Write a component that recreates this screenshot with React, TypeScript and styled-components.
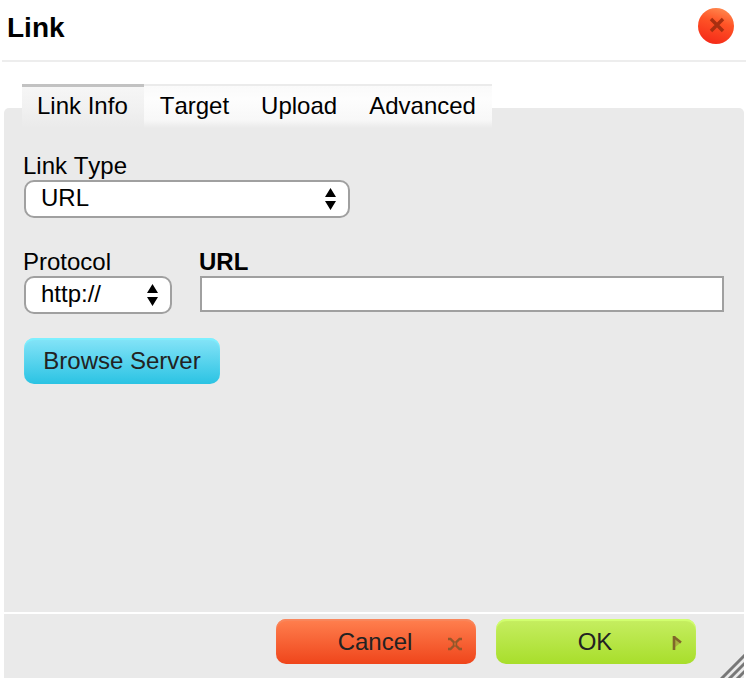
import React from "react";
import styled, { createGlobalStyle } from "styled-components";

const GlobalStyle = createGlobalStyle`
  * { box-sizing: border-box; }
  body { margin: 0; background: #fff; }
  body, button, input, select {
    font-family: "Liberation Sans", Arial, Helvetica, sans-serif;
    font-size: 24px;
    line-height: 28px;
    font-kerning: none;
    color: #000;
  }
`;

const Dialog = styled.div`
  display: flex;
  flex-direction: column;
  min-height: 100vh;
  padding: 0 8px 6px 4px;
`;

const Header = styled.header`
  display: flex;
  justify-content: space-between;
  align-items: flex-start;
  height: 62px;
  margin: 0 -2px;
  padding: 8px 12px 0 5px;
  border-bottom: 2px solid #ededed;
`;

const Title = styled.h1`
  margin: 4px 0 0;
  font-size: 28px;
  line-height: 32px;
`;

const CloseButton = styled.button`
  display: flex;
  width: 36px;
  height: 36px;
  padding: 0;
  border: 0;
  border-radius: 50%;
  background: none;
`;

const Tabs = styled.nav`
  position: relative;
  z-index: 1;
  display: flex;
  align-self: flex-start;
  height: 44px;
  margin: 22px 0 -20px 18px;
`;

const Tab = styled.button<{ $active?: boolean }>`
  height: 44px;
  padding: ${(p) => (p.$active ? "0 16px 4px 15px" : "0 16px 2px")};
  border: 0;
  border-top: ${(p) => (p.$active ? "3px solid #c2c2c2" : "2px solid #ebebeb")};
  background: ${(p) =>
    p.$active
      ? "linear-gradient(#f6f6f6, #f1f1f1 50%, #eaeaea)"
      : "linear-gradient(#fafafa, #fdfdfd 30%, #f8f8f8 80%, #eaeaea)"};
`;

const Panel = styled.main`
  display: flex;
  flex: 1;
  flex-direction: column;
  align-items: flex-start;
  padding: 44px 20px 24px;
  border-radius: 5px 5px 0 0;
  background: #eaeaea;
`;

const Row = styled.div<{ $spacious?: boolean }>`
  display: flex;
  align-self: stretch;
  gap: 28px;
  margin-bottom: ${(p) => (p.$spacious ? "30px" : "24px")};
`;

const Field = styled.div<{ $grow?: boolean; $width?: number }>`
  display: flex;
  flex-direction: column;
  flex: ${(p) => (p.$grow ? "1" : "none")};
  width: ${(p) => (p.$width ? `${p.$width}px` : "auto")};
`;

const Label = styled.label<{ $bold?: boolean }>`
  margin-left: -1px;
  font-weight: ${(p) => (p.$bold ? "bold" : "normal")};
`;

const SelectBox = styled.div`
  display: grid;
  align-items: center;

  > * { grid-area: 1 / 1; }
  > svg {
    justify-self: end;
    margin-right: 14px;
    pointer-events: none;
  }
`;

const Select = styled.select`
  appearance: none;
  width: 100%;
  height: 38px;
  padding: 0 32px 2px 15px;
  border: 2px solid #a0a0a0;
  border-radius: 10px;
  background: #fff;
`;

const TextInput = styled.input`
  width: 100%;
  height: 36px;
  padding: 0 6px;
  border: 2px solid #a0a0a0;
  border-radius: 0;
  background: #fff;
`;

const tones = {
  blue: { top: "#7df0ff", fill: "#86e4f8, #2bc3e3" },
  red: { top: "#f9875d", fill: "#ff804f, #ef451b" },
  green: { top: "#d2ff70", fill: "#c6ee62, #a8de2b" },
};

const ActionButton = styled.button<{ $tone: keyof typeof tones }>`
  display: grid;
  align-items: center;
  justify-items: center;
  height: 45px;
  padding: 0 14px 0 12px;
  border: 0;
  border-radius: 10px;
  color: #222;
  background: linear-gradient(${(p) => tones[p.$tone].fill});
  box-shadow: inset 0 2px 1px ${(p) => tones[p.$tone].top};

  > * { grid-area: 1 / 1; }
  > svg { justify-self: end; }
`;

const BrowseButton = styled(ActionButton)`
  height: 46px;
  min-width: 196px;
  padding: 0 19px;
`;

const FooterButton = styled(ActionButton)`
  width: 200px;
`;

const Footer = styled.footer`
  position: relative;
  display: flex;
  justify-content: flex-end;
  gap: 20px;
  height: 64px;
  margin-top: 2px;
  padding: 5px 48px 0 20px;
  background: #eaeaea;
`;

const Grip = styled.svg`
  position: absolute;
  right: 0;
  bottom: 0;
`;

const Arrows = () => (
  <svg width="11" height="22" viewBox="0 0 11 22" aria-hidden="true">
    <path d="M5.5 0 11 9H0Z M0 13h11L5.5 22Z" />
  </svg>
);

const CloseIcon = () => (
  <svg width="36" height="36" viewBox="0 0 36 36" aria-hidden="true">
    <defs>
      <linearGradient id="closeFill" x1="0.7" y1="0" x2="0.4" y2="1">
        <stop offset="0" stopColor="#ff8a50" />
        <stop offset="0.4" stopColor="#ff5426" />
        <stop offset="1" stopColor="#f52a18" />
      </linearGradient>
    </defs>
    <circle cx="18" cy="18" r="18" fill="url(#closeFill)" />
    <path d="m13 11 12 12M25 11 13 23" stroke="#a82f10" strokeWidth="3.4" />
  </svg>
);

const CrossIcon = () => (
  <svg width="14" height="18" viewBox="0 0 14 18" aria-hidden="true">
    <path
      d="M0 6h2.5L6 9.5v3L2.5 16H0M14 6h-2.5L8 9.5v3l3.5 3.5H14"
      fill="none"
      stroke="#94562a"
      strokeWidth="2.4"
    />
    <path d="M6 11h2" stroke="#c0632f" strokeWidth="3" />
  </svg>
);

const PlayIcon = () => (
  <svg width="10" height="16" viewBox="0 0 10 16" aria-hidden="true">
    <path d="M2 3 9 8.500 2 14Z" fill="#a9b23e" />
    <path d="M2 2v14" stroke="#80662a" strokeWidth="2.6" />
    <path d="m2 3 7 5.500" stroke="#80662a" strokeWidth="2.4" />
  </svg>
);

export default function App() {
  return (
    <>
      <GlobalStyle />
      <Dialog role="dialog" aria-labelledby="title">
        <Header>
          <Title id="title">Link</Title>
          <CloseButton aria-label="Close">
            <CloseIcon />
          </CloseButton>
        </Header>
        <Tabs role="tablist">
          <Tab $active role="tab" aria-selected="true">Link Info</Tab>
          <Tab role="tab" aria-selected="false">Target</Tab>
          <Tab role="tab" aria-selected="false">Upload</Tab>
          <Tab role="tab" aria-selected="false">Advanced</Tab>
        </Tabs>
        <Panel>
          <Row $spacious>
            <Field $width={326}>
              <Label htmlFor="linkType">Link Type</Label>
              <SelectBox>
                <Select id="linkType"><option>URL</option></Select>
                <Arrows />
              </SelectBox>
            </Field>
          </Row>
          <Row>
            <Field $width={148}>
              <Label htmlFor="protocol">Protocol</Label>
              <SelectBox>
                <Select id="protocol"><option>http://</option></Select>
                <Arrows />
              </SelectBox>
            </Field>
            <Field $grow>
              <Label $bold htmlFor="url">URL</Label>
              <TextInput id="url" type="text" />
            </Field>
          </Row>
          <BrowseButton $tone="blue">Browse Server</BrowseButton>
        </Panel>
        <Footer>
          <FooterButton $tone="red">
            <span>Cancel</span>
            <CrossIcon />
          </FooterButton>
          <FooterButton $tone="green">
            <span>OK</span>
            <PlayIcon />
          </FooterButton>
          <Grip width="24" height="24" viewBox="0 0 24 24" aria-hidden="true">
            <path d="M0 26 26 0M8 26 26 8M16 26 26 16" stroke="#777" strokeWidth="3" />
          </Grip>
        </Footer>
      </Dialog>
    </>
  );
}
